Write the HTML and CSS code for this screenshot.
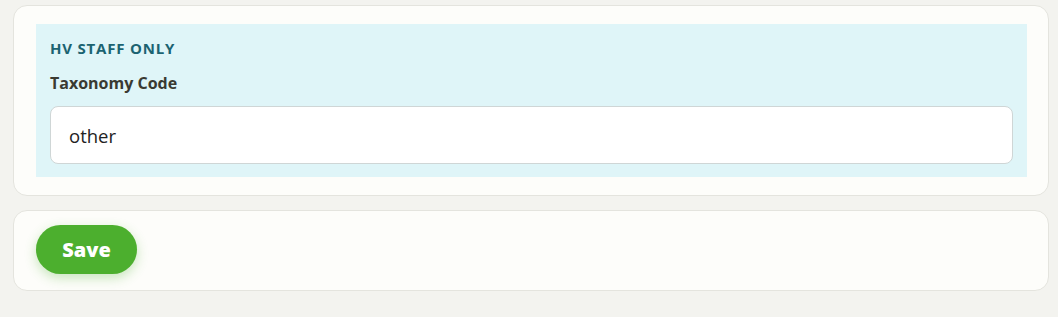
FILE: index.html
```html
<!DOCTYPE html>
<html lang="en">
<head>
<meta charset="utf-8">
<title>Taxonomy</title>
<link rel="stylesheet" href="styles.css">
</head>
<body>
<div class="page">
  <section class="card card-form">
    <div class="staff-panel">
      <h3 class="staff-title">HV STAFF ONLY</h3>
      <label class="field-label" for="tax">Taxonomy Code</label>
      <input class="field-input" id="tax" type="text" value="other">
    </div>
  </section>
  <section class="card card-actions">
    <button class="btn-save" type="button">Save</button>
  </section>
</div>
</body>
</html>
```
FILE: styles.css
```css
* { box-sizing: border-box; }
html, body {
  margin: 0;
  background: #f3f3ef;
}
body {
  font-family: "Open Sans", "Lato", sans-serif;
  color: #333;
}
.page {
  display: flex;
  flex-direction: column;
  gap: 14px;
  padding: 5px 9px 0 13px;
}
.card {
  background: #fdfdfa;
  border: 1px solid #e4e4de;
  border-radius: 14px;
}
.card-form {
  padding: 18px 21px 18px 22px;
}
.staff-panel {
  background: #dff5f8;
  padding: 15px 14px 13px 14px;
  display: flex;
  flex-direction: column;
}
.staff-title {
  margin: 0;
  font-size: 15px;
  font-weight: 700;
  letter-spacing: 0.8px;
  color: #1b6371;
  line-height: 19px;
}
.field-label {
  margin-top: 15px;
  font-size: 16px;
  font-weight: 700;
  color: #3a3a32;
  line-height: 21px;
}
.field-input {
  margin-top: 12px;
  height: 58px;
  border: 1px solid #cfd6d6;
  border-radius: 8px;
  background: #fff;
  padding: 0 18px;
  font-family: inherit;
  font-size: 18.5px;
  color: #222;
  outline: none;
}
.card-actions {
  padding: 14px 22px 16px 22px;
  display: flex;
}
.btn-save {
  height: 49px;
  width: 101px;
  border: none;
  border-radius: 25px;
  background: #4caf2e;
  color: #fff;
  font-family: inherit;
  font-size: 20px;
  font-weight: 800;
  box-shadow: 0 4px 12px rgba(76, 175, 46, 0.3);
  cursor: pointer;
}
```
